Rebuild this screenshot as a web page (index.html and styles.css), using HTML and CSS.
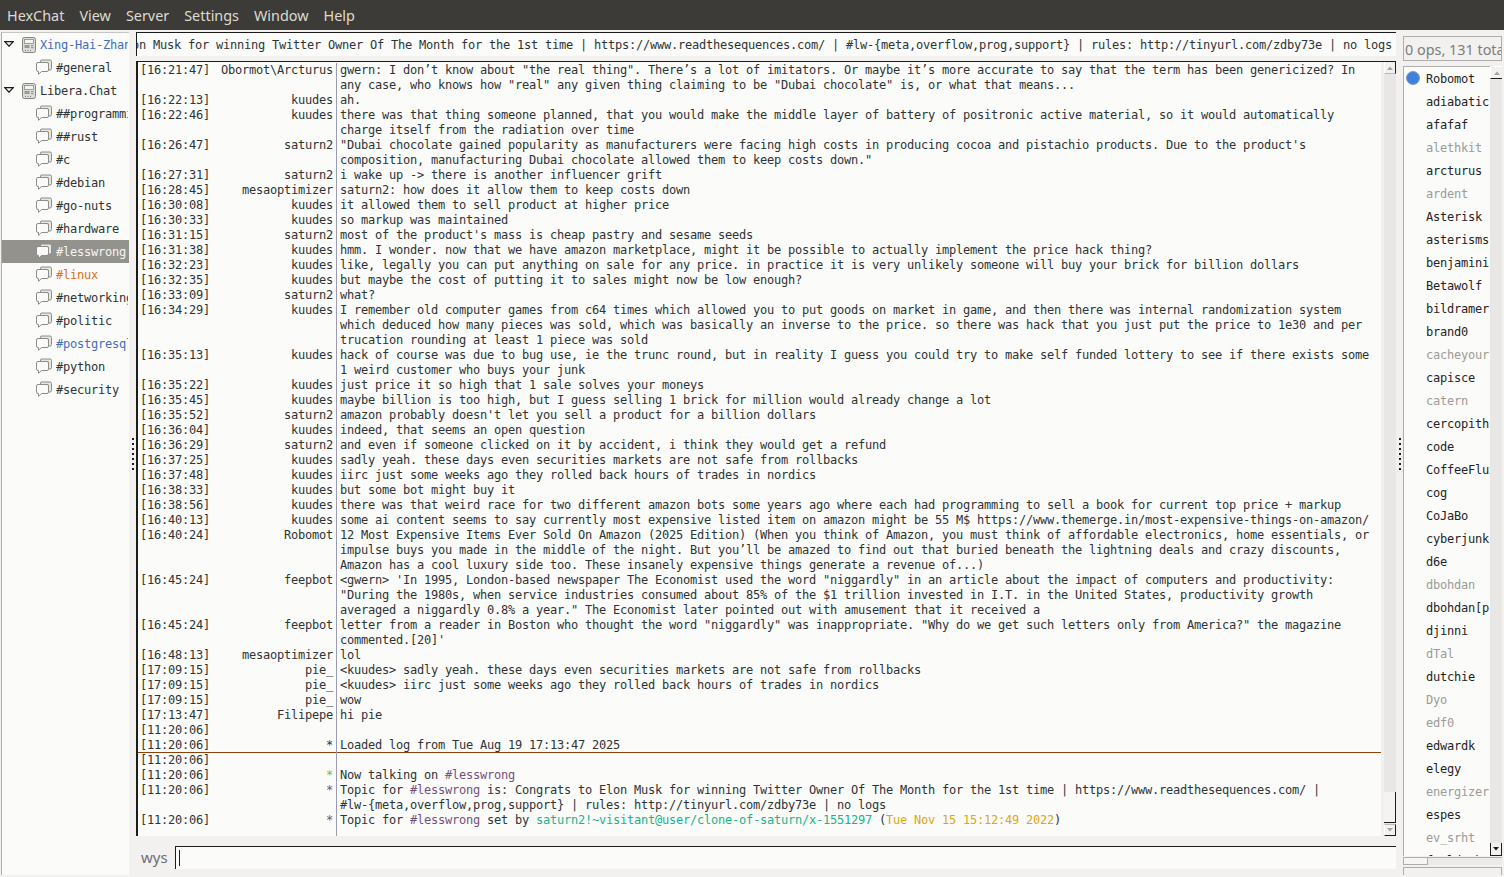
FILE: index.html
```html
<!DOCTYPE html>
<html lang="en">
<head>
<meta charset="utf-8">
<title>HexChat</title>
<link rel="stylesheet" href="styles.css">
</head>
<body>
<svg class="defs" width="0" height="0">
  <symbol id="arrow" viewBox="0 0 10 6"><path d="M0.8 0.7H9.2L5 5.2Z" fill="#fbfbf9" stroke="#1c1c1c" stroke-width="1.2"/></symbol>
  <symbol id="server" viewBox="0 0 14 16">
    <rect x="0.5" y="0.5" width="13" height="15" rx="2" fill="#dcdcd8" stroke="#85857e"/>
    <rect x="2.5" y="2.5" width="9" height="4" fill="#f4f4f2" stroke="#8a8a84" stroke-width="0.8"/>
    <rect x="2.5" y="8" width="5" height="3" fill="#9a9a93"/>
    <rect x="9" y="8" width="2.5" height="1.2" fill="#9a9a93"/>
    <rect x="9" y="10" width="2.5" height="1.2" fill="#9a9a93"/>
    <path d="M3 13.5H4M5.5 13.5H6.5M8 13.5H9" stroke="#85857e"/>
  </symbol>
  <symbol id="chat" viewBox="0 0 16 16">
    <path d="M5 1H14a1.5 1.5 0 0 1 1.500 1.500V9.500a1.500 1.500 0 0 1-1.500 1.500H12.500V4H4Z" fill="#e6e6e2" stroke="#8e8e88"/>
    <path d="M2 3.500H11a1.500 1.500 0 0 1 1.500 1.500V11a1.500 1.500 0 0 1-1.500 1.500H5.500L2.500 15.300V12.500H2A1.500 1.500 0 0 1 0.500 11V5A1.500 1.500 0 0 1 2 3.500Z" fill="#fbfbf9" stroke="#8e8e88"/>
  </symbol>
  <symbol id="up" viewBox="0 0 6 4"><path d="M3 0.500L6 4H0Z"/></symbol>
  <symbol id="down" viewBox="0 0 6 4"><path d="M3 3.500L6 0H0Z"/></symbol>
</svg>
<nav class="menubar">
  <span>HexChat</span><span>View</span><span>Server</span><span>Settings</span><span>Window</span><span>Help</span>
</nav>
<main class="main">
  <aside class="tree">
    <div class="node server"><svg class="arrow"><use href="#arrow"/></svg><svg class="server-icon"><use href="#server"/></svg><span class="blue">Xing-Hai-Zhang</span></div>
    <div class="node chan"><svg class="chat-icon"><use href="#chat"/></svg><span>#general</span></div>
    <div class="node server"><svg class="arrow"><use href="#arrow"/></svg><svg class="server-icon"><use href="#server"/></svg><span>Libera.Chat</span></div>
    <div class="node chan"><svg class="chat-icon"><use href="#chat"/></svg><span>##programming</span></div>
    <div class="node chan"><svg class="chat-icon"><use href="#chat"/></svg><span>##rust</span></div>
    <div class="node chan"><svg class="chat-icon"><use href="#chat"/></svg><span>#c</span></div>
    <div class="node chan"><svg class="chat-icon"><use href="#chat"/></svg><span>#debian</span></div>
    <div class="node chan"><svg class="chat-icon"><use href="#chat"/></svg><span>#go-nuts</span></div>
    <div class="node chan"><svg class="chat-icon"><use href="#chat"/></svg><span>#hardware</span></div>
    <div class="node chan selected"><svg class="chat-icon"><use href="#chat"/></svg><span>#lesswrong</span></div>
    <div class="node chan"><svg class="chat-icon"><use href="#chat"/></svg><span class="orange">#linux</span></div>
    <div class="node chan"><svg class="chat-icon"><use href="#chat"/></svg><span>#networking</span></div>
    <div class="node chan"><svg class="chat-icon"><use href="#chat"/></svg><span>#politic</span></div>
    <div class="node chan"><svg class="chat-icon"><use href="#chat"/></svg><span class="blue">#postgresql</span></div>
    <div class="node chan"><svg class="chat-icon"><use href="#chat"/></svg><span>#python</span></div>
    <div class="node chan"><svg class="chat-icon"><use href="#chat"/></svg><span>#security</span></div>
  </aside>
  <div class="handle"><i class="grip"></i></div>
  <section class="center">
    <div class="topic"><span>Topic: Congrats to Elon Musk for winning Twitter Owner Of The Month for the 1st time | https://www.readthesequences.com/ | #lw-{meta,overflow,prog,support} | rules: http://tinyurl.com/zdby73e | no logs</span></div>
    <div class="chat-wrap">
      <div class="chat">
        <div class="row"><span class="time">[16:21:47]</span><span class="nick">Obormot\Arcturus</span><span class="msg">gwern: I don’t know about "the real thing". There’s a lot of imitators. Or maybe it’s more accurate to say that the term has been genericized? In any case, who knows how "real" any given thing claiming to be "Dubai chocolate" is, or what that means...</span></div>
        <div class="row"><span class="time">[16:22:13]</span><span class="nick">kuudes</span><span class="msg">ah.</span></div>
        <div class="row"><span class="time">[16:22:46]</span><span class="nick">kuudes</span><span class="msg">there was that thing someone planned, that you would make the middle layer of battery of positronic active material, so it would automatically charge itself from the radiation over time</span></div>
        <div class="row"><span class="time">[16:26:47]</span><span class="nick">saturn2</span><span class="msg">"Dubai chocolate gained popularity as manufacturers were facing high costs in producing cocoa and pistachio products. Due to the product's composition, manufacturing Dubai chocolate allowed them to keep costs down."</span></div>
        <div class="row"><span class="time">[16:27:31]</span><span class="nick">saturn2</span><span class="msg">i wake up -&gt; there is another influencer grift</span></div>
        <div class="row"><span class="time">[16:28:45]</span><span class="nick">mesaoptimizer</span><span class="msg">saturn2: how does it allow them to keep costs down</span></div>
        <div class="row"><span class="time">[16:30:08]</span><span class="nick">kuudes</span><span class="msg">it allowed them to sell product at higher price</span></div>
        <div class="row"><span class="time">[16:30:33]</span><span class="nick">kuudes</span><span class="msg">so markup was maintained</span></div>
        <div class="row"><span class="time">[16:31:15]</span><span class="nick">saturn2</span><span class="msg">most of the product's mass is cheap pastry and sesame seeds</span></div>
        <div class="row"><span class="time">[16:31:38]</span><span class="nick">kuudes</span><span class="msg">hmm. I wonder. now that we have amazon marketplace, might it be possible to actually implement the price hack thing?</span></div>
        <div class="row"><span class="time">[16:32:23]</span><span class="nick">kuudes</span><span class="msg">like, legally you can put anything on sale for any price. in practice it is very unlikely someone will buy your brick for billion dollars</span></div>
        <div class="row"><span class="time">[16:32:35]</span><span class="nick">kuudes</span><span class="msg">but maybe the cost of putting it to sales might now be low enough?</span></div>
        <div class="row"><span class="time">[16:33:09]</span><span class="nick">saturn2</span><span class="msg">what?</span></div>
        <div class="row"><span class="time">[16:34:29]</span><span class="nick">kuudes</span><span class="msg">I remember old computer games from c64 times which allowed you to put goods on market in game, and then there was internal randomization system which deduced how many pieces was sold, which was basically an inverse to the price. so there was hack that you just put the price to 1e30 and per trucation rounding at least 1 piece was sold</span></div>
        <div class="row"><span class="time">[16:35:13]</span><span class="nick">kuudes</span><span class="msg">hack of course was due to bug use, ie the trunc round, but in reality I guess you could try to make self funded lottery to see if there exists some 1 weird customer who buys your junk</span></div>
        <div class="row"><span class="time">[16:35:22]</span><span class="nick">kuudes</span><span class="msg">just price it so high that 1 sale solves your moneys</span></div>
        <div class="row"><span class="time">[16:35:45]</span><span class="nick">kuudes</span><span class="msg">maybe billion is too high, but I guess selling 1 brick for million would already change a lot</span></div>
        <div class="row"><span class="time">[16:35:52]</span><span class="nick">saturn2</span><span class="msg">amazon probably doesn't let you sell a product for a billion dollars</span></div>
        <div class="row"><span class="time">[16:36:04]</span><span class="nick">kuudes</span><span class="msg">indeed, that seems an open question</span></div>
        <div class="row"><span class="time">[16:36:29]</span><span class="nick">saturn2</span><span class="msg">and even if someone clicked on it by accident, i think they would get a refund</span></div>
        <div class="row"><span class="time">[16:37:25]</span><span class="nick">kuudes</span><span class="msg">sadly yeah. these days even securities markets are not safe from rollbacks</span></div>
        <div class="row"><span class="time">[16:37:48]</span><span class="nick">kuudes</span><span class="msg">iirc just some weeks ago they rolled back hours of trades in nordics</span></div>
        <div class="row"><span class="time">[16:38:33]</span><span class="nick">kuudes</span><span class="msg">but some bot might buy it</span></div>
        <div class="row"><span class="time">[16:38:56]</span><span class="nick">kuudes</span><span class="msg">there was that weird race for two different amazon bots some years ago where each had programming to sell a book for current top price + markup</span></div>
        <div class="row"><span class="time">[16:40:13]</span><span class="nick">kuudes</span><span class="msg">some ai content seems to say currently most expensive listed item on amazon might be 55 M$ https://www.themerge.in/most-expensive-things-on-amazon/</span></div>
        <div class="row"><span class="time">[16:40:24]</span><span class="nick">Robomot</span><span class="msg">12 Most Expensive Items Ever Sold On Amazon (2025 Edition) (When you think of Amazon, you must think of affordable electronics, home essentials, or impulse buys you made in the middle of the night. But you’ll be amazed to find out that buried beneath the lightning deals and crazy discounts, Amazon has a cool luxury side too. These insanely expensive things generate a revenue of...)</span></div>
        <div class="row"><span class="time">[16:45:24]</span><span class="nick">feepbot</span><span class="msg">&lt;gwern&gt; 'In 1995, London-based newspaper The Economist used the word "niggardly" in an article about the impact of computers and productivity: "During the 1980s, when service industries consumed about 85% of the $1 trillion invested in I.T. in the United States, productivity growth averaged a niggardly 0.8% a year." The Economist later pointed out with amusement that it received a</span></div>
        <div class="row"><span class="time">[16:45:24]</span><span class="nick">feepbot</span><span class="msg">letter from a reader in Boston who thought the word "niggardly" was inappropriate. "Why do we get such letters only from America?" the magazine commented.[20]'</span></div>
        <div class="row"><span class="time">[16:48:13]</span><span class="nick">mesaoptimizer</span><span class="msg">lol</span></div>
        <div class="row"><span class="time">[17:09:15]</span><span class="nick">pie_</span><span class="msg">&lt;kuudes&gt; sadly yeah. these days even securities markets are not safe from rollbacks</span></div>
        <div class="row"><span class="time">[17:09:15]</span><span class="nick">pie_</span><span class="msg">&lt;kuudes&gt; iirc just some weeks ago they rolled back hours of trades in nordics</span></div>
        <div class="row"><span class="time">[17:09:15]</span><span class="nick">pie_</span><span class="msg">wow</span></div>
        <div class="row"><span class="time">[17:13:47]</span><span class="nick">Filipepe</span><span class="msg">hi pie</span></div>
        <div class="row"><span class="time">[11:20:06]</span><span class="nick"></span><span class="msg"></span></div>
        <div class="row marker"><span class="time">[11:20:06]</span><span class="nick">*</span><span class="msg">Loaded log from Tue Aug 19 17:13:47 2025</span></div>
        <div class="row"><span class="time">[11:20:06]</span><span class="nick"></span><span class="msg"></span></div>
        <div class="row"><span class="time">[11:20:06]</span><span class="nick green">*</span><span class="msg">Now talking on <span class="purple">#lesswrong</span></span></div>
        <div class="row"><span class="time">[11:20:06]</span><span class="nick purple">*</span><span class="msg">Topic for <span class="purple">#lesswrong</span> is: Congrats to Elon Musk for winning Twitter Owner Of The Month for the 1st time | https://www.readthesequences.com/ | <span class="nobreak">#lw-{meta,overflow,prog,support}</span> | rules: http://tinyurl.com/zdby73e | no logs</span></div>
        <div class="row"><span class="time">[11:20:06]</span><span class="nick purple">*</span><span class="msg">Topic for <span class="purple">#lesswrong</span> set by <span class="teal">saturn2!~visitant@user/clone-of-saturn/x-1551297</span> (<span class="yellow">Tue Nov 15 15:12:49 2022</span>)</span></div>
        <div class="row filler"><span class="time"></span><span class="nick"></span><span class="msg"></span></div>
      </div>
      <div class="vscroll">
        <div class="btn first"><svg class="tick faint"><use href="#up"/></svg></div>
        <div class="trough end"><div class="thumb"></div></div>
        <div class="btn last"><svg class="tick faint"><use href="#down"/></svg></div>
      </div>
    </div>
    <div class="input-row"><span class="me">wys</span><div class="entry"><i class="caret"></i></div></div>
  </section>
  <div class="handle"><i class="grip"></i></div>
  <aside class="side">
    <div class="count"><span>0 ops, 131 total</span></div>
    <div class="list-wrap">
      <ul class="users">
        <li><i class="dot"></i>Robomot</li>
        <li>adiabatic</li>
        <li>afafaf</li>
        <li class="away">alethkit</li>
        <li>arcturus</li>
        <li class="away">ardent</li>
        <li>Asterisk</li>
        <li>asterisms</li>
        <li>benjamini</li>
        <li>Betawolf</li>
        <li>bildramer</li>
        <li>brand0</li>
        <li class="away">cacheyourself</li>
        <li>capisce</li>
        <li class="away">catern</li>
        <li>cercopith</li>
        <li>code</li>
        <li>CoffeeFlux</li>
        <li>cog</li>
        <li>CoJaBo</li>
        <li>cyberjunkie</li>
        <li>d6e</li>
        <li class="away">dbohdan</li>
        <li>dbohdan[p]</li>
        <li>djinni</li>
        <li class="away">dTal</li>
        <li>dutchie</li>
        <li class="away">Dyo</li>
        <li class="away">edf0</li>
        <li>edwardk</li>
        <li>elegy</li>
        <li class="away">energizer</li>
        <li>espes</li>
        <li class="away">ev_srht</li>
        <li>fowlduck</li>
      </ul>
      <div class="vscroll narrow">
        <div class="btn first-side"><svg class="tick faint"><use href="#up"/></svg></div>
        <div class="trough"></div>
        <div class="btn last-side"><svg class="tick"><use href="#down"/></svg></div>
      </div>
    </div>
    <div class="hscroll"><div class="hthumb"></div></div>
    <div class="stub"></div>
  </aside>
</main>
</body>
</html>
```

FILE: styles.css
```css
* { box-sizing: border-box; }
html, body { height: 100%; }
body {
  margin: 0;
  background: #f2f1f0;
  color: #2e3436;
  font: 12px/15px "DejaVu Sans Mono", monospace;
  letter-spacing: -0.224px;
  overflow: hidden;
  display: flex;
  flex-direction: column;
}
.defs { position: absolute; }

.menubar {
  height: 30px;
  flex: none;
  background: #3c3b37;
  color: #dfdbd2;
  font: 14.4px/32px "Noto Sans", sans-serif;
  letter-spacing: 0;
  display: flex;
  gap: 15px;
  padding-left: 7px;
}

.main { flex: 1; min-height: 0; display: flex; }

.tree {
  width: 128px;
  margin: 2px 0 2px 1px;
  flex: none;
  background: #fbfbf9;
  border-left: 1px solid #aeaca8;
  border-top: 1px solid #c8c6c2;
  overflow: hidden;
}
.node {
  height: 23px;
  display: flex;
  align-items: center;
  white-space: nowrap;
  overflow: hidden;
  line-height: 23px;
  padding-right: 1px;
}
.node span { overflow: hidden; margin-top: 2px; height: 23px; }
.server { padding-left: 2px; }
.chan { padding-left: 34px; }
.arrow { width: 10px; height: 6px; flex: none; margin: -2px 8px 0 0; }
.server-icon { width: 14px; height: 16px; flex: none; margin-right: 4px; }
.chat-icon { width: 16px; height: 16px; flex: none; margin: -1px 4px 0 0; }
.selected { background: #94928c; color: #f6f6f4; }
.blue { color: #3f6fbd; }
.orange { color: #e0701c; }

.handle { width: 7px; flex: none; display: flex; align-items: center; justify-content: center; }
.grip {
  display: block;
  width: 2px;
  height: 33px;
  margin: 2px 0 0 1px;
  background: repeating-linear-gradient(#1c1c1c 0 2px, transparent 2px 5px);
}

.center { flex: 1; min-width: 0; display: flex; flex-direction: column; padding: 2px 0 8px; }
.topic {
  height: 24px;
  flex: none;
  background: #fbfbf9;
  border-top: 1px solid #1c1c1c;
  border-left: 1px solid #1c1c1c;
  padding: 2px 4px 0 0;
  display: flex;
  justify-content: flex-end;
  align-items: center;
  white-space: nowrap;
  overflow: hidden;
}
.topic span { flex: none; }

.chat-wrap {
  flex: 1;
  min-height: 0;
  margin-top: 5px;
  display: flex;
  border-top: 1px solid #1c1c1c;
}
.chat {
  flex: 1;
  min-width: 0;
  padding-top: 1px;
  background: #fbfbf9;
  border-left: 2px solid #1c1c1c;
  display: flex;
  flex-direction: column;
  overflow: hidden;
}
.row { display: grid; grid-template-columns: 70px 125px 1fr; flex: none; }
.time { padding-left: 2px; white-space: pre; }
.nick { text-align: right; white-space: nowrap; }
.msg {
  margin-left: 3px;
  border-left: 1px solid #9c9cb0;
  padding: 0 7px 0 3px;
  min-height: 15px;
  white-space: pre-wrap;
}
.nobreak { white-space: nowrap; }
.marker { box-shadow: inset 0 -1px 0 #8f3f0a; }
.filler { flex: 1; }
.green { color: #73c41d; }
.purple { color: #75507b; }
.teal { color: #18b48c; }
.yellow { color: #d9a90f; }

.vscroll { width: 12px; margin-left: 3px; flex: none; display: flex; flex-direction: column; }
.vscroll.narrow { margin-left: 0; }
.btn {
  height: 12px;
  flex: none;
  background: #f2f1f0;
  border-left: 1px solid #fff;
  display: flex;
  align-items: center;
  justify-content: center;
}
.first, .first-side { border-right: 1px solid #1c1c1c; border-bottom: 1px solid #bbb9b5; }
.last { border-right: 1px solid #1c1c1c; border-bottom: 1px solid #1c1c1c; border-top: 1px solid #bbb9b5; }
.first-side { height: 13px; border-bottom: 1px solid #1c1c1c; border-top: 1px solid #fff; border-right: 0; }
.last-side { height: 13px; border-left: 1px solid #1c1c1c; border-bottom: 1px solid #1c1c1c; border-right: 1px solid #1c1c1c; }
.tick { width: 6px; height: 4px; fill: #1c1c1c; }
.tick.faint { fill: #a5a3a0; }
.trough { flex: 1; min-height: 0; background: #e8e7e5; display: flex; flex-direction: column; justify-content: flex-end; }
.trough.end { padding-bottom: 1px; }
.thumb { height: 31px; background: #f4f3f2; border-right: 1px solid #1c1c1c; border-bottom: 1px solid #1c1c1c; }

.input-row { height: 23px; margin-top: 10px; flex: none; display: flex; align-items: center; }
.me {
  width: 39px;
  padding-left: 5px;
  flex: none;
  font: 15px/25px "Noto Sans", sans-serif;
  letter-spacing: 0;
  color: #6a6f78;
}
.entry {
  flex: 1;
  height: 23px;
  background: #fbfbf9;
  border-top: 1px solid #1c1c1c;
  border-left: 1px solid #1c1c1c;
  padding: 3px 0 2px 3px;
}
.caret { display: block; width: 1px; height: 16px; background: #1c1c1c; }

.side { width: 99px; flex: none; margin-right: 2px; padding: 6px 0 2px; display: flex; flex-direction: column; }
.count {
  height: 25px;
  flex: none;
  border: 1px solid #b0aeaa;
  background: #f2f1f0;
  color: #7d7d78;
  font: 14.4px/26px "Noto Sans", sans-serif;
  letter-spacing: 0;
  padding-left: 1px;
  white-space: nowrap;
  overflow: hidden;
}
.list-wrap { flex: 1; min-height: 0; margin-top: 5px; display: flex; }
.users {
  flex: 1;
  min-width: 0;
  margin: 0;
  padding: 1px 0 0 22px;
  list-style: none;
  background: #fbfbf9;
  border: 1px solid #b0aeaa;
  border-width: 1px 0 0 1px;
  overflow: hidden;
  position: relative;
  color: #1f2426;
}
.users li { height: 23px; line-height: 23px; white-space: nowrap; overflow: hidden; }
.away { color: #9c9c98; }
.dot {
  position: absolute;
  left: 2px;
  top: 4px;
  width: 14px;
  height: 14px;
  border-radius: 50%;
  background: #3f80dc;
  border: 1px solid #7e9cc8;
}
.hscroll { height: 8px; flex: none; margin-top: 1px; background: #ecebe9; border-top: 1px solid #b0aeaa; }
.hthumb { width: 25px; height: 7px; background: #f6f5f4; border: 1px solid #b0aeaa; border-top: 0; }
.stub { height: 8px; flex: none; margin-top: 2px; border: 1px solid #b0aeaa; border-bottom: 0; background: #f2f1f0; }
```
